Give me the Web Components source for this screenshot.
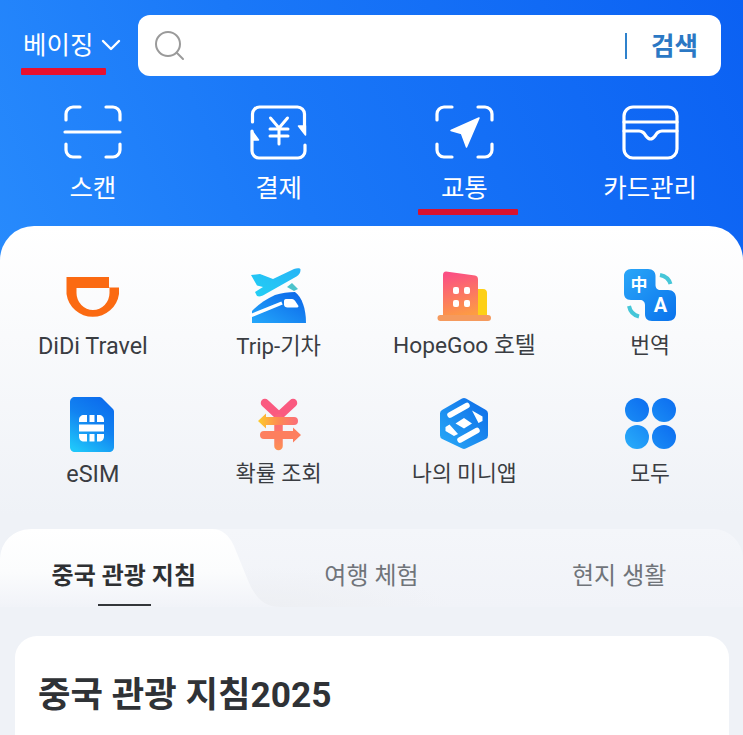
<!DOCTYPE html>
<html lang="ko">
<head>
<meta charset="utf-8">
<title>베이징</title>
<style>
  html, body { margin: 0; height: 735px; overflow: hidden; }
  body { font-family: Roboto, "Noto Sans CJK KR", sans-serif; }
</style>
</head>
<body>
<app-screen>
  <top-bar slot="header" city="베이징" action="검색"></top-bar>
  <shortcut-row slot="header">
    <shortcut-item label="스캔">
      <svg viewBox="63 102 60 60" fill="none" stroke="#fff" stroke-width="3.2" stroke-linecap="round">
        <path d="M66 120v-6a7 7 0 0 1 7-7h7M106 107h7a7 7 0 0 1 7 7v6M65 132h55M66 144v6a7 7 0 0 0 7 7h7M106 157h7a7 7 0 0 0 7-7v-6"/>
      </svg>
    </shortcut-item>
    <shortcut-item label="결제">
      <svg viewBox="249 102 60 60" fill="none" stroke="#fff" stroke-width="3.2" stroke-linecap="round" stroke-linejoin="round">
        <path d="M252.500 122v-8a7 7 0 0 1 7-7h38a7 7 0 0 1 7 7v12M305 145v6a7 7 0 0 1-7 7h-39a7 7 0 0 1-7-7v-20"/>
        <path d="M305.500 126v9l-7-9zM252 140v-9l6.500 9z" fill="#fff" stroke-width="1.500"/>
        <path d="M270.500 118l8.500 10 8.500-10M270 129h18M270 136h18M279 128v16" stroke-width="3"/>
      </svg>
    </shortcut-item>
    <shortcut-item label="교통" marked>
      <svg viewBox="434 102 60 60" fill="none" stroke="#fff" stroke-width="3.2" stroke-linecap="round" stroke-linejoin="round">
        <path d="M437 120v-6a7 7 0 0 1 7-7h8M478 107h7a7 7 0 0 1 7 7v6M437 144v6a7 7 0 0 0 7 7h8M478 157h7a7 7 0 0 0 7-7v-6"/>
        <path d="M479 118l-28 12.500 10.500 3 5 13.500z" fill="#fff" stroke-width="1.500"/>
      </svg>
    </shortcut-item>
    <shortcut-item label="카드관리">
      <svg viewBox="620 102 60 60" fill="none" stroke="#fff" stroke-width="3.2" stroke-linecap="round" stroke-linejoin="round">
        <rect x="624" y="107" width="53" height="51" rx="9"/>
        <path d="M624 122h53M624 131h15c4 0 5 2 7 5 3 4 6 4 9 0 2-3 3-5 7-5h15"/>
      </svg>
    </shortcut-item>
  </shortcut-row>

  <service-grid>
    <service-item label="DiDi Travel" style="font-size:23.4px">
      <svg viewBox="63 266 60 60">
        <path fill="#fb6a12" fill-rule="evenodd" d="M66.500 277H109v10.500h10V294a26.500 26.500 0 0 1-52.500 0zM76.500 288v5a16.500 17 0 0 0 33 0v-5z"/>
      </svg>
    </service-item>
    <service-item label="Trip-기차" style="font-size:22.2px">
      <svg viewBox="249 266 60 60">
        <defs>
          <linearGradient id="plane" x1="0" y1="1" x2="1" y2="0"><stop offset="0" stop-color="#22d0f4"/><stop offset="1" stop-color="#27b4f6"/></linearGradient>
          <linearGradient id="train" x1="0" y1="1" x2="1" y2="0"><stop offset="0" stop-color="#24a8fb"/><stop offset="1" stop-color="#0a63e8"/></linearGradient>
        </defs>
        <path fill="#4cc3cb" d="M287 287l5-4 6 6-4 2z"/>
        <path fill="url(#plane)" d="M251 275l9-1 13 5 21-10c3-1 7-1 6.500 1 0 3-1.500 5-4 6.500l-31 17.500c-3 2-6 3-8.500 2l-2-4 8-5-6-1.500z"/>
        <path fill="url(#train)" d="M252 311c6-6 14-12 23-16 6-2 14-3 20-3 7 5 11 17 11 31h-54z"/>
        <path fill="none" stroke="#fff" stroke-width="3.500" d="M250 316l32-13"/>
        <path fill="#fff" d="M284 301c0-1.500 1-2 3-2h5c1.500 0 2.500 1 3.500 2.500l3 4.500c0 1-1 1.500-2 1.500h-9c-2 0-3.500-1-3.500-3z"/>
      </svg>
    </service-item>
    <service-item label="HopeGoo 호텔" style="font-size:22.7px">
      <svg viewBox="434 266 60 60">
        <defs>
          <linearGradient id="tower" x1="0.400" y1="0" x2="0.600" y2="1"><stop offset="0" stop-color="#fb4f84"/><stop offset="1" stop-color="#fd9d42"/></linearGradient>
        </defs>
        <path fill="#fdd017" d="M476 289h7c3 0 4 2 4 4v24h-11z"/>
        <path fill="url(#tower)" d="M443 275c0-2 1-3.500 3-3.500l29 4c2 .5 3 1.500 3 4V317h-35z"/>
        <rect x="437.500" y="315" width="53.500" height="6" rx="3" fill="#f59a5e"/>
        <g fill="#fff">
          <rect x="453" y="287" width="6" height="7" rx="2"/><rect x="464" y="287" width="6" height="7" rx="2"/>
          <rect x="453" y="300" width="6" height="7" rx="2"/><rect x="464" y="300" width="6" height="7" rx="2"/>
        </g>
      </svg>
    </service-item>
    <service-item label="번역">
      <svg viewBox="620 266 60 60">
        <defs>
          <linearGradient id="lang" x1="0" y1="0" x2="1" y2="1"><stop offset="0" stop-color="#2aa6f8"/><stop offset="1" stop-color="#0a72ec"/></linearGradient>
        </defs>
        <path fill="url(#lang)" d="M631 269h17c5 0 7.500 3 7.500 7v9c0 3 2 5 5 5H668c5 0 8 3 8 8v15c0 5-3 8-8 8h-16c-5 0-7-3-7-7v-9c0-3-2-5-5-5h-9c-5 0-7-3-7-7v-17c0-4 3-7 7-7z"/>
        <path fill="none" stroke="#45c6d8" stroke-width="4" d="M660 275c5 1 9 4 10.500 9M629 306c1 5 4 9 10 10.500"/>
        <text x="639" y="291" text-anchor="middle" font-family="'Noto Sans CJK SC', sans-serif" font-size="17" font-weight="700" fill="#fff">中</text>
        <text x="660.500" y="312" text-anchor="middle" font-family="Roboto, sans-serif" font-size="20" font-weight="700" fill="#fff">A</text>
      </svg>
    </service-item>
    <service-item label="eSIM" style="font-size:23.4px">
      <svg viewBox="63 394 60 60">
        <defs>
          <linearGradient id="sim" x1="0.200" y1="1" x2="0.700" y2="0"><stop offset="0" stop-color="#1fc6fa"/><stop offset=".55" stop-color="#1283f1"/><stop offset="1" stop-color="#0c6ced"/></linearGradient>
        </defs>
        <path fill="url(#sim)" d="M75 397h24c1.500 0 2.500.5 3.500 1.500l10 10c1 1 1.500 2 1.500 3.500v35c0 3-2 5-5 5H75c-3 0-5-2-5-5v-45c0-3 2-5 5-5z"/>
        <g fill="#fff">
          <path d="M84 415h3v7h-8v-2c0-3 2-5 5-5zM89.500 415h5v7h-5zM97 415h2c3 0 5 2 5 5v2h-7z"/>
          <rect x="79" y="424.500" width="25" height="7"/>
          <path d="M79 434h8v7.500h-3c-3 0-5-2-5-5zM89.500 434h5v7.500h-5zM97 434h7v2.500c0 3-2 5-5 5h-2z"/>
        </g>
      </svg>
    </service-item>
    <service-item label="확률 조회" style="font-size:22px">
      <svg viewBox="249 394 60 60">
        <defs>
          <linearGradient id="barTop" gradientUnits="userSpaceOnUse" x1="258" y1="0" x2="300" y2="0"><stop offset="0" stop-color="#fdcb2a"/><stop offset=".5" stop-color="#fd8a54"/><stop offset="1" stop-color="#fb6a7c"/></linearGradient>
          <linearGradient id="stem" gradientUnits="userSpaceOnUse" x1="0" y1="415" x2="0" y2="450"><stop offset="0" stop-color="#fb5f7e"/><stop offset="1" stop-color="#fd9052"/></linearGradient>
        </defs>
        <path fill="none" stroke="#fa5a80" stroke-width="8.500" stroke-linecap="round" stroke-linejoin="round" d="M265 403l14 13 14-13"/>
        <path fill="none" stroke="url(#stem)" stroke-width="8.500" stroke-linecap="round" d="M278.500 418V446"/>
        <path fill="url(#barTop)" d="M258 421l8-7.500v3.500H294a4 4 0 0 1 0 8H266v3.500z"/>
        <path fill="#fd7f5f" d="M301 435l-8 7.500V439H264a4 4 0 0 1 0-8h29v-3.500z"/>
      </svg>
    </service-item>
    <service-item label="나의 미니앱">
      <svg viewBox="434 394 60 60">
        <defs>
          <linearGradient id="hex" x1="0" y1="1" x2="1" y2="0"><stop offset="0" stop-color="#27a6f6"/><stop offset="1" stop-color="#0f6fe9"/></linearGradient>
        </defs>
        <path fill="url(#hex)" stroke="url(#hex)" stroke-width="8" stroke-linejoin="round" d="M464 402l20 11.500v22L464 445l-20-9.500v-22z"/>
        <path fill="none" stroke="#fff" stroke-width="5.500" stroke-linecap="round" d="M450 415l17-9.500M460 440l17-9.500"/>
        <path fill="#fff" d="M464 418l8 5.500-8 5-8.500-5zM472 410.500l10.500 6v4.500l-4 2zM445.500 427l4-2.500 8.500 9.500-4 2-8.500-5z"/>
      </svg>
    </service-item>
    <service-item label="모두">
      <svg viewBox="620 394 60 60">
        <defs>
          <linearGradient id="dotA" x1="0" y1="1" x2="1" y2="0"><stop offset="0" stop-color="#1a8df5"/><stop offset="1" stop-color="#0c6cf0"/></linearGradient>
          <linearGradient id="dotB" x1="0" y1="1" x2="1" y2="0"><stop offset="0" stop-color="#2aaefa"/><stop offset="1" stop-color="#1788f5"/></linearGradient>
        </defs>
        <circle cx="637" cy="410" r="12" fill="url(#dotA)"/><circle cx="664" cy="410" r="12" fill="url(#dotA)"/>
        <circle cx="637" cy="437" r="12" fill="url(#dotB)"/><circle cx="664" cy="437" r="12" fill="url(#dotA)"/>
      </svg>
    </service-item>
  </service-grid>
  <tab-strip active="0">
    <span>중국 관광 지침</span>
    <span>여행 체험</span>
    <span>현지 생활</span>
  </tab-strip>
  <guide-card>중국 관광 지침2025</guide-card>
</app-screen>

<script>
// 전체 화면: 파란 헤더 + 흰 패널
class AppScreen extends HTMLElement {
  constructor() {
    super();
    this.attachShadow({ mode: 'open' });
    this.shadowRoot.innerHTML = `
      <style>
        :host {
          display: block;
          width: 743px;
          height: 735px;
          overflow: hidden;
          background: linear-gradient(68deg, #2f95ff 0%, #1a78f8 50%, #0b61f3 100%);
        }
        header { padding-top: 15px; height: 226px; box-sizing: border-box; }
        .panel {
          height: 509px;
          border-radius: 34px 34px 0 0;
          padding-top: 40px;
          box-sizing: border-box;
          background: linear-gradient(#ffffff 0, #eff2f7 290px);
        }
      </style>
      <header><slot name="header"></slot></header>
      <div class="panel"><slot></slot></div>
    `;
  }
}

class TopBar extends HTMLElement {
  constructor() {
    super();
    this.attachShadow({ mode: 'open' });
  }
  connectedCallback() {
    this.shadowRoot.innerHTML = `
      <style>
        :host { display: flex; height: 61px; color: #fff; }
        .city {
          position: relative;
          width: 138px;
          flex: none;
          box-sizing: border-box;
          padding-left: 23px;
          display: flex;
          align-items: center;
          gap: 8px;
          font-size: 25.5px;
          line-height: 58px;
          height: 59px;
        }
        /* 빨간 밑줄 표시 */
        .city::after {
          content: '';
          position: absolute;
          left: 21px;
          top: 53px;
          width: 85px;
          height: 7px;
          background: #e8102e;
          border-radius: 1px;
        }
        .search {
          flex: none;
          width: 583px;
          background: #fff;
          border-radius: 12px;
          display: flex;
          align-items: center;
          padding: 0 23px 0 16px;
          box-sizing: border-box;
        }
        .grow { flex: 1; }
        .sep { width: 2px; height: 26px; background: #2f82cc; margin-right: 24px; }
        .action { font-size: 25.5px; font-weight: 700; color: #2b78c4; line-height: 1; padding-top: 2px; }
      </style>
      <div class="city">
        <span>${this.getAttribute('city')}</span>
        <svg width="20" height="12" viewBox="0 0 20 12" fill="none" stroke="#fff" stroke-width="2.400" stroke-linecap="round" stroke-linejoin="round"><path d="M2 2l8 8 8-8"/></svg>
      </div>
      <div class="search">
        <svg width="32" height="32" viewBox="0 0 32 32" fill="none" stroke="#9a9a9a" stroke-width="2"><circle cx="14" cy="14" r="12"/><path d="M23 23l6 6" stroke-linecap="round"/></svg>
        <span class="grow"></span>
        <span class="sep"></span>
        <span class="action">${this.getAttribute('action')}</span>
      </div>
    `;
  }
}

class ShortcutRow extends HTMLElement {
  constructor() {
    super();
    this.attachShadow({ mode: 'open' });
    this.shadowRoot.innerHTML = `
      <style>
        :host { display: grid; grid-template-columns: repeat(4, 1fr); margin-top: 26px; }
      </style>
      <slot></slot>
    `;
  }
}

class ShortcutItem extends HTMLElement {
  constructor() {
    super();
    this.attachShadow({ mode: 'open' });
  }
  connectedCallback() {
    this.shadowRoot.innerHTML = `
      <style>
        :host {
          position: relative;
          display: flex;
          flex-direction: column;
          align-items: center;
          color: #fff;
          font-size: 25.5px;
        }
        ::slotted(svg) { width: 60px; height: 60px; display: block; }
        .label { margin-top: 10px; line-height: 32px; }
        :host([marked])::after {
          content: '';
          position: absolute;
          left: 46px;
          top: 107px;
          width: 100px;
          height: 6px;
          background: #d8122f;
          border-radius: 1px;
        }
      </style>
      <slot></slot>
      <span class="label">${this.getAttribute('label')}</span>
    `;
  }
}

class ServiceGrid extends HTMLElement {
  constructor() {
    super();
    this.attachShadow({ mode: 'open' });
    this.shadowRoot.innerHTML = `
      <style>
        :host { display: grid; grid-template-columns: repeat(4, 1fr); row-gap: 32px; }
      </style>
      <slot></slot>
    `;
  }
}

class ServiceItem extends HTMLElement {
  constructor() {
    super();
    this.attachShadow({ mode: 'open' });
  }
  connectedCallback() {
    this.shadowRoot.innerHTML = `
      <style>
        :host {
          display: flex;
          flex-direction: column;
          align-items: center;
          color: #3a3d42;
          font-size: 21.6px;
        }
        ::slotted(svg) { width: 60px; height: 60px; display: block; }
        .label { margin-top: 4px; line-height: 32px; white-space: nowrap; }
      </style>
      <slot></slot>
      <span class="label">${this.getAttribute('label')}</span>
    `;
  }
}

class TabStrip extends HTMLElement {
  constructor() {
    super();
    this.attachShadow({ mode: 'open' });
    this.shadowRoot.innerHTML = `
      <style>
        :host {
          position: relative;
          display: block;
          height: 78px;
          margin-top: 39px;
          border-radius: 30px 30px 0 0;
          background: linear-gradient(#f4f6fa, #f1f3f8);
          overflow: hidden;
          color: #70747a;
          font-size: 24px;
        }
        .shape { position: absolute; left: 0; top: 0; }
        .tabs {
          position: relative;
          display: grid;
          grid-template-columns: repeat(3, 1fr);
          text-align: center;
          line-height: 32px;
          padding-top: 31px;
        }
        ::slotted(span) { position: relative; display: block; }
        ::slotted(span.on) { color: #2e3033; font-weight: 700; }
        .bar {
          position: absolute;
          left: 98px;
          top: 75px;
          width: 53px;
          height: 2px;
          background: #33363a;
        }
      </style>
      <svg class="shape" width="460" height="78" viewBox="0 0 460 78">
        <defs>
          <linearGradient id="tabFill" x1="0" y1="0" x2="0" y2="1"><stop offset="0" stop-color="#fff"/><stop offset=".55" stop-color="#fbfcfd"/><stop offset="1" stop-color="#f1f3f8"/></linearGradient>
          <radialGradient id="tabShade" cx=".2" cy="1" r=".8"><stop offset="0" stop-color="#edeff3"/><stop offset="1" stop-color="#edeff3" stop-opacity="0"/></radialGradient>
        </defs>
        <rect x="210" y="28" width="240" height="50" fill="url(#tabShade)"/>
        <path d="M0 78V30C0 12 14 0 32 0h180c10 0 17 6 22 17l13 32c6 15 14 29 34 29z" fill="url(#tabFill)"/>
      </svg>
      <div class="tabs"><slot></slot></div>
      <div class="bar"></div>
    `;
  }
  connectedCallback() {
    const active = Number(this.getAttribute('active') || 0);
    Array.from(this.children).forEach((tab, i) => tab.classList.toggle('on', i === active));
  }
}

class GuideCard extends HTMLElement {
  constructor() {
    super();
    this.attachShadow({ mode: 'open' });
    this.shadowRoot.innerHTML = `
      <style>
        :host {
          display: block;
          margin: 29px 14px 0 15px;
          padding: 37px 23px 0;
          height: 130px;
          background: #fff;
          border-radius: 22px;
          color: #2f3236;
          font-size: 35.3px;
          font-weight: 700;
          line-height: 44px;
        }
      </style>
      <slot></slot>
    `;
  }
}

customElements.define('app-screen', AppScreen);
customElements.define('top-bar', TopBar);
customElements.define('shortcut-row', ShortcutRow);
customElements.define('shortcut-item', ShortcutItem);
customElements.define('service-grid', ServiceGrid);
customElements.define('service-item', ServiceItem);
customElements.define('tab-strip', TabStrip);
customElements.define('guide-card', GuideCard);
</script>
</body>
</html>
